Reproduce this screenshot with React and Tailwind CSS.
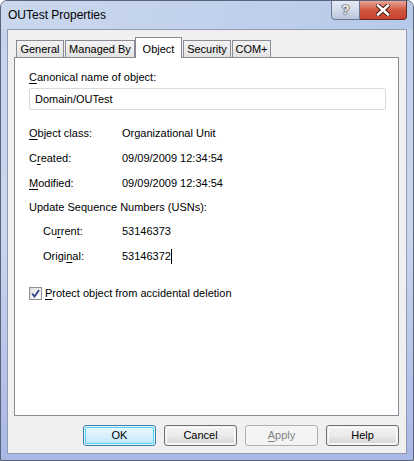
import React from 'react';

const FONT = "font-['Liberation_Sans',Arial,sans-serif]";

function Key({ children }) {
  return <span className="underline underline-offset-[2px] decoration-[1px]">{children}</span>;
}

function Tab({ label, selected, className = '' }) {
  if (selected) {
    return (
      <div className={`relative z-10 h-[21px] -mb-[1px] bg-white border border-[#898c95] border-b-0 flex items-start justify-center pt-[3px] ${className}`}>
        {label}
      </div>
    );
  }
  return (
    <div className={`h-[17px] bg-gradient-to-b from-[#f3f3f3] to-[#e2e2e2] border border-[#898c95] border-b-0 flex items-center justify-center ${className}`}>
      {label}
    </div>
  );
}

function Button({ children, primary, disabled }) {
  if (disabled) {
    return (
      <div className="w-[73px] h-[21px] rounded-[3px] border border-[#adb2b5] bg-[#f4f4f4] text-[#838383] flex items-center justify-center">
        {children}
      </div>
    );
  }
  return (
    <div className={`w-[73px] h-[21px] rounded-[3px] border ${primary ? 'border-[#3c7fb1]' : 'border-[#707070]'} p-[1px]`}>
      <div className={`w-full h-full rounded-[2px] flex items-center justify-center bg-gradient-to-b ${primary ? 'from-[#eaf6fd] via-[#d9f0fc] to-[#bee6fd] shadow-[inset_0_0_0_1px_#48d8fb]' : 'from-[#f2f2f2] via-[#ebebeb] to-[#d4d4d4] shadow-[inset_0_0_0_1px_#fcfcfc]'}`}>
        {children}
      </div>
    </div>
  );
}

function Row({ label, value, indent, h = 'h-[25px]', cursor }) {
  return (
    <div className={`flex items-center ${h}`}>
      <div className={`${indent ? 'pl-[14px] w-[93px]' : 'w-[93px]'}`}>{label}</div>
      <div className="flex items-center">
        {value}
        {cursor && <span className="inline-block w-[1px] h-[15px] bg-black" />}
      </div>
    </div>
  );
}

export default function App() {
  return (
    <div className={`${FONT} w-[414px] h-[461px] relative overflow-hidden rounded-t-[7px] bg-gradient-to-b from-[#c3d3ec] via-[#c9d7ee] to-[#a9b7e6] border border-[#5a6478] text-[11px] text-black`}>
      {/* title bar */}
      <div className="h-[28px] flex items-center pl-[7px] text-[12px] bg-gradient-to-r from-[#cad8ee] via-[#c2d1ec] to-[#b7c9ea]">
        OUTest Properties
      </div>

      {/* caption buttons */}
      <div className="absolute top-[-1px] right-[6px] flex h-[20px]">
        <div className="w-[29px] h-full rounded-bl-[4px] border border-[#6a7590] bg-gradient-to-b from-[#e6ecf5] via-[#d2dbe9] to-[#b9c6dc] flex items-center justify-center">
          <span className="text-white font-bold text-[13px] [text-shadow:0_0_1px_#333,0_0_1px_#333,0_0_2px_#333]">?</span>
        </div>
        <div className="w-[47px] h-full rounded-br-[4px] border border-l-0 border-[#6a2a24] bg-gradient-to-b from-[#e9a798] via-[#cf5642] to-[#c9422c] flex items-center justify-center">
          <svg width="14" height="12" viewBox="0 0 14 12">
            <path d="M2 1.5 L12 10.5 M12 1.5 L2 10.5" stroke="#4a1a14" strokeWidth="4.5" strokeLinecap="square" />
            <path d="M2 1.5 L12 10.5 M12 1.5 L2 10.5" stroke="#ffffff" strokeWidth="2.5" strokeLinecap="square" />
          </svg>
        </div>
      </div>

      {/* client area */}
      <div className="mx-[6px] h-[425px] border border-[#8e9bb3] bg-[#f0f0f0] flex flex-col pt-[7px] px-[6px]">
        {/* tabs */}
        <div className="flex items-end pl-[2px] h-[20px]">
          <Tab label="General" className="w-[48px]" />
          <Tab label="Managed By" className="w-[70px] ml-[1px]" />
          <Tab label="Object" selected className="w-[47px]" />
          <Tab label="Security" className="w-[48px] ml-[1px]" />
          <Tab label="COM+" className="w-[39px] ml-[1px]" />
        </div>

        {/* panel */}
        <div className="w-[385px] h-[359px] border border-[#898c95] bg-white pl-[14px] pt-[11px]">
          <div className="h-[16px] flex items-center"><Key>C</Key>anonical name of object:</div>
          <div className="mt-[3px] w-[357px] h-[22px] border border-[#dadada] rounded-[2px] flex items-center pl-[5px]">
            Domain/OUTest
          </div>
          <div className="mt-[11px]">
            <Row label={<><Key>O</Key>bject class:</>} value="Organizational Unit" />
            <Row label={<>C<Key>r</Key>eated:</>} value="09/09/2009 12:34:54" />
            <Row label={<><Key>M</Key>odified:</>} value="09/09/2009 12:34:54" />
            <div className="h-[23px] flex items-center">Update Sequence Numbers (USNs):</div>
            <Row indent label={<>Cu<Key>r</Key>rent:</>} value="53146373" />
            <Row indent label={<>Origi<Key>n</Key>al:</>} value="53146372" cursor />
          </div>
          <div className="mt-[16px] flex items-center h-[16px]">
            <div className="w-[13px] h-[13px] border border-[#8e8f8f] bg-gradient-to-br from-[#dcdcdc] to-[#fbfbfb] p-[1px]">
              <div className="w-full h-full bg-gradient-to-br from-[#e6e6e6] to-[#ffffff] flex items-center justify-center">
                <svg width="9" height="9" viewBox="0 0 9 9">
                  <path d="M1 4.5 L3.5 7.5 L8 1" fill="none" stroke="#2b4387" strokeWidth="1.8" />
                </svg>
              </div>
            </div>
            <span className="ml-[3px]"><Key>P</Key>rotect object from accidental deletion</span>
          </div>
        </div>

        {/* buttons */}
        <div className="mt-[9px] flex justify-end gap-[8px] w-[385px]">
          <Button primary>OK</Button>
          <Button>Cancel</Button>
          <Button disabled><Key>A</Key>pply</Button>
          <Button>Help</Button>
        </div>
      </div>
    </div>
  );
}
